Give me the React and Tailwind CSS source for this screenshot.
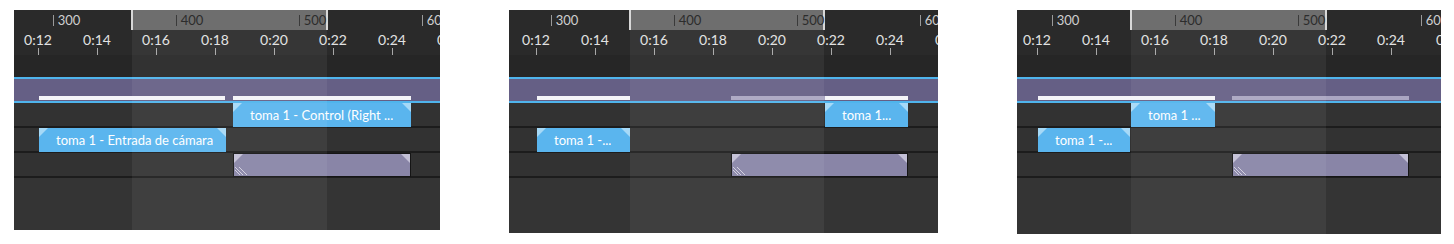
import React from 'react';

const FONT = { fontFamily: 'Lato, "Open Sans", sans-serif' };

const PANELS = [
  {
    className: 'ml-[14px] w-[426px] h-[220px]',
    t0: 24,
    sel: [118, 313],
    bars: [
      { x1: 25, x2: 211, tone: 'white' },
      { x1: 219, x2: 397, tone: 'white' },
    ],
    clips: [
      { row: 0, x1: 219, x2: 397, kind: 'blue', label: 'toma 1 - Control (Right ...' },
      { row: 1, x1: 25, x2: 212, kind: 'blue', label: 'toma 1 - Entrada de cámara' },
      { row: 2, x1: 219, x2: 397, kind: 'purple' },
    ],
  },
  {
    className: 'ml-[69px] w-[429px] h-[223px]',
    t0: 27,
    sel: [121, 315],
    bars: [
      { x1: 28, x2: 121, tone: 'white' },
      { x1: 222, x2: 316, tone: 'lav' },
      { x1: 316, x2: 399, tone: 'white' },
    ],
    clips: [
      { row: 0, x1: 316, x2: 399, kind: 'blue', label: 'toma 1...' },
      { row: 1, x1: 28, x2: 121, kind: 'blue', label: 'toma 1 -...' },
      { row: 2, x1: 222, x2: 399, kind: 'purple' },
    ],
  },
  {
    className: 'ml-[79px] w-[424px] h-[224px]',
    t0: 20,
    sel: [114, 309],
    bars: [
      { x1: 21, x2: 198, tone: 'white' },
      { x1: 215, x2: 392, tone: 'lav' },
    ],
    clips: [
      { row: 0, x1: 114, x2: 198, kind: 'blue', label: 'toma 1 ...' },
      { row: 1, x1: 21, x2: 113, kind: 'blue', label: 'toma 1 -...' },
      { row: 2, x1: 215, x2: 392, kind: 'purple' },
    ],
  },
];

const SEC = 29.5;

function Clip({ clip }) {
  const blue = clip.kind === 'blue';
  return (
    <div
      className={`absolute top-0 h-[24px] flex items-center ${
        blue ? 'bg-[#5ab5ee]' : 'bg-[#8985a7] border border-[#151515]'
      }`}
      style={{ left: clip.x1, width: clip.x2 - clip.x1 }}
    >
      <div
        className={`absolute left-0 top-0 w-[9px] h-[9px] [clip-path:polygon(0_0,100%_0,0_100%)] ${
          blue ? 'bg-[#a6d9f7]' : 'bg-[#c3c0d6]'
        }`}
      />
      <div
        className={`absolute right-0 top-0 w-[9px] h-[9px] [clip-path:polygon(0_0,100%_0,100%_100%)] ${
          blue ? 'bg-[#a6d9f7]' : 'bg-[#c3c0d6]'
        }`}
      />
      {blue ? (
        <span className="pl-[17px] text-[13px] leading-none text-white whitespace-nowrap overflow-hidden">
          {clip.label}
        </span>
      ) : (
        <svg className="absolute left-0 bottom-0" width="14" height="9" viewBox="0 0 14 9">
          <path d="M1 3 L6 8 M1 0 L9 8 M5 0 L13 8" stroke="#e4e2ee" strokeWidth="1" opacity="0.8" />
        </svg>
      )}
    </div>
  );
}

function Panel({ p }) {
  const times = [12, 14, 16, 18, 20, 22, 24, 26];
  const frames = [300, 400, 500, 600];
  const f300 = p.t0 + 0.5 * SEC;
  return (
    <div className={`relative overflow-hidden flex flex-col bg-[#343434] ${p.className}`} style={FONT}>
      {/* frame strip */}
      <div className="relative h-[20px] bg-[#2a2a2a] shrink-0">
        <div
          className="absolute top-0 h-[20px] bg-[#6e6e6e] border-l-2 border-r-2 border-[#d8d8d8]"
          style={{ left: p.sel[0] - 1, width: p.sel[1] - p.sel[0] + 2 }}
        />
        {frames.map((f, i) => {
          const x = f300 + i * 123;
          const inSel = x > p.sel[0] && x < p.sel[1];
          return (
            <div key={f} className="absolute top-0 h-[20px] flex items-center" style={{ left: x }}>
              <div className={`w-px h-[11px] ${inSel ? 'bg-[#3a3a3a]' : 'bg-[#9a9a9a]'}`} />
              <span className={`ml-[4px] text-[13px] leading-none ${inSel ? 'text-[#2c2c2c]' : 'text-[#cfcfcf]'}`}>
                {f}
              </span>
            </div>
          );
        })}
      </div>
      {/* time strip */}
      <div className="relative h-[25px] bg-[#2a2a2a] shrink-0">
        {times.map((t, i) => {
          const x = p.t0 + i * SEC * 2;
          return (
            <div key={t} className="absolute top-0 h-[25px] w-[40px] -ml-[20px] flex flex-col items-center" style={{ left: x }}>
              <span className="mt-[2px] text-[14px] leading-[15px] text-[#e2e2e2]">0:{t}</span>
              <div className="mt-auto w-px h-[7px] bg-[#a8a8a8]" />
            </div>
          );
        })}
      </div>
      <div className="h-[22px] bg-[#262626] shrink-0" />
      <div className="h-[2px] bg-[#4fb4ec] shrink-0" />
      <div className="relative h-[22px] bg-[#655f85] shrink-0">
        {p.bars.map((b, i) => (
          <div
            key={i}
            className={`absolute bottom-[1px] h-[4px] ${b.tone === 'white' ? 'bg-[#f4f4f8]' : 'bg-[#aaa6c2]'}`}
            style={{ left: b.x1, width: b.x2 - b.x1 }}
          />
        ))}
      </div>
      <div className="h-[2px] bg-[#4fb4ec] shrink-0" />
      {[0, 1, 2].map((r) => (
        <div key={r} className="relative h-[25px] bg-[#323232] border-b-2 border-[#1c1c1c] shrink-0">
          {p.clips
            .filter((c) => c.row === r)
            .map((c, i) => (
              <Clip key={i} clip={c} />
            ))}
        </div>
      ))}
      <div className="flex-1 bg-[#343434]" />
      {/* selection highlight */}
      <div
        className="absolute top-[20px] bottom-0 bg-white/[0.06] pointer-events-none"
        style={{ left: p.sel[0], width: p.sel[1] - p.sel[0] }}
      />
    </div>
  );
}

export default function App() {
  return (
    <div className="w-[1454px] h-[244px] bg-white flex items-start pt-[10px]">
      {PANELS.map((p, i) => (
        <Panel key={i} p={p} />
      ))}
    </div>
  );
}
